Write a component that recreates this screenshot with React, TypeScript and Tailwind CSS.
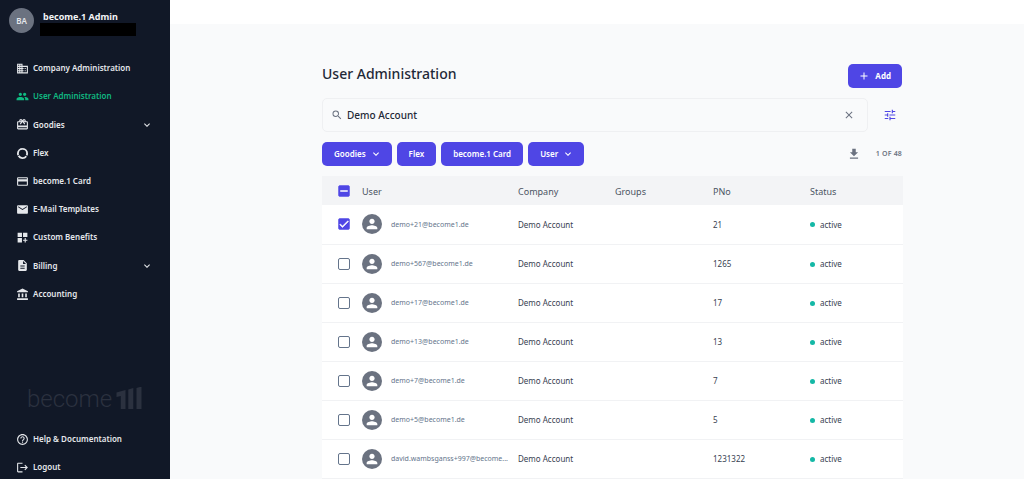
import { useState } from "react";
import type { ComponentType } from "react";
import {
	MdAccountBalance,
	MdAdd,
	MdBusiness,
	MdCardGiftcard,
	MdCheck,
	MdClose,
	MdCreditCard,
	MdDashboardCustomize,
	MdDescription,
	MdEmail,
	MdExpandMore,
	MdGetApp,
	MdGroup,
	MdHelpOutline,
	MdLogout,
	MdPerson,
	MdRemove,
	MdSearch,
	MdTune,
} from "react-icons/md";

interface NavItem {
	label: string;
	icon: ComponentType<{ className?: string }>;
	active?: boolean;
	expandable?: boolean;
}

interface User {
	email: string;
	pno: string;
}

function FlexIcon({ className = "" }: { className?: string }) {
	return (
		<svg viewBox="0 0 24 24" fill="none" className={className}>
			<circle
				cx="12"
				cy="12"
				r="8.5"
				stroke="currentColor"
				strokeWidth="3.4"
				strokeDasharray="16.3 1.5"
				transform="rotate(-87 12 12)"
			/>
		</svg>
	);
}

const navItems: NavItem[] = [
	{ label: "Company Administration", icon: MdBusiness },
	{ label: "User Administration", icon: MdGroup, active: true },
	{ label: "Goodies", icon: MdCardGiftcard, expandable: true },
	{ label: "Flex", icon: FlexIcon },
	{ label: "become.1 Card", icon: MdCreditCard },
	{ label: "E-Mail Templates", icon: MdEmail },
	{ label: "Custom Benefits", icon: MdDashboardCustomize },
	{ label: "Billing", icon: MdDescription, expandable: true },
	{ label: "Accounting", icon: MdAccountBalance },
];

const footerItems: NavItem[] = [
	{ label: "Help & Documentation", icon: MdHelpOutline },
	{ label: "Logout", icon: MdLogout },
];

const filters = [
	{ label: "Goodies", menu: true },
	{ label: "Flex", menu: false },
	{ label: "become.1 Card", menu: false },
	{ label: "User", menu: true },
];

const users: User[] = [
	{ email: "demo+21@become1.de", pno: "21" },
	{ email: "demo+567@become1.de", pno: "1265" },
	{ email: "demo+17@become1.de", pno: "17" },
	{ email: "demo+13@become1.de", pno: "13" },
	{ email: "demo+7@become1.de", pno: "7" },
	{ email: "demo+5@become1.de", pno: "5" },
	{ email: "david.wambsganss+997@become...", pno: "1231322" },
];

function NavEntry({ label, icon: Icon, active, expandable }: NavItem) {
	const tone = active ? "text-[#10b981]" : "text-[#e5e7eb]";
	const base = `flex w-full items-center gap-1 pl-4 pr-[17px] text-[8px] font-semibold ${tone}`;

	if (expandable) {
		return (
			<button type="button" className={`${base} h-[25px]`}>
				<Icon className="size-[13px] shrink-0" />
				<span className="flex-1 text-left">{label}</span>
				<MdExpandMore className="size-3" />
			</button>
		);
	}

	return (
		<a href="#" className={`${base} h-6`}>
			<Icon className="size-[13px] shrink-0" />
			{label}
		</a>
	);
}

function Logo() {
	return (
		<div className="flex h-6 items-end gap-1 pl-[27px] text-[#2b313f]">
			<span className="font-[Roboto,sans-serif] text-[24px] leading-6 font-light">
				become
			</span>
			<svg viewBox="0 0 26 24" className="h-6 w-[26px]" fill="currentColor">
				<path d="M0.500 5.500 9.500 3V22H4.800V9L0.500 10Z" />
				<path d="M12.300 2.500 17.300 1V22H12.300Z" />
				<path d="M20.500 1 25.500 -0.500V22H20.500Z" />
			</svg>
		</div>
	);
}

interface CheckboxProps {
	label: string;
	checked: boolean;
	indeterminate?: boolean;
	onChange: () => void;
}

function Checkbox({ label, checked, indeterminate = false, onChange }: CheckboxProps) {
	const filled = checked || indeterminate;
	const Mark = indeterminate ? MdRemove : MdCheck;

	return (
		<label className="relative ml-4 block size-3">
			<input
				type="checkbox"
				aria-label={label}
				checked={checked}
				onChange={onChange}
				className={`block size-3 appearance-none rounded-[2px] border ${
					filled ? "border-[#4f46e5] bg-[#4f46e5]" : "border-[#64748b] bg-white"
				}`}
			/>
			{filled && (
				<Mark className="pointer-events-none absolute inset-0 size-3 stroke-white stroke-1 text-white" />
			)}
		</label>
	);
}

export default function App() {
	const [query, setQuery] = useState("Demo Account");
	const [selected, setSelected] = useState<string[]>([users[0].email]);

	const allSelected = selected.length === users.length;

	const toggle = (email: string) =>
		setSelected((prev) =>
			prev.includes(email) ? prev.filter((e) => e !== email) : [...prev, email],
		);

	return (
		<div className="flex h-screen bg-[#f9fafb] font-['Noto_Sans',sans-serif] text-[#1f2937]">
			<aside className="flex w-[170px] shrink-0 flex-col overflow-hidden bg-[#111827]">
				<div className="flex gap-2 pt-2 pl-[9px]">
					<div className="flex size-[25px] items-center justify-center rounded-full bg-[#6b7280] text-[8px] font-semibold text-[#e5e7eb]">
						BA
					</div>
					<div>
						<p className="pt-[2px] pl-px text-[9px] leading-[13px] font-bold text-[#f3f4f6]">
							become.1 Admin
						</p>
						<div className="-ml-[2px] h-[13px] w-24 bg-black" />
					</div>
				</div>

				<nav className="mt-5 flex flex-col gap-1">
					{navItems.map((item) => (
						<NavEntry key={item.label} {...item} />
					))}
				</nav>

				<div className="mt-auto flex flex-col gap-1">
					<div className="pb-3">
						<Logo />
					</div>
					{footerItems.map((item) => (
						<NavEntry key={item.label} {...item} />
					))}
				</div>
			</aside>

			<div className="flex min-w-0 flex-1 flex-col">
				<header className="h-6 shrink-0 bg-white" />

				<main className="min-h-0 flex-1 overflow-y-auto pt-10 pl-[31px]">
					<div className="mx-auto max-w-[581px]">
						<div className="pr-px">
							<div className="flex items-start justify-between">
								<h1 className="text-[14px] leading-5 font-medium">User Administration</h1>
								<button
									type="button"
									className="flex h-6 items-center gap-1 rounded-[5px] bg-[#4f46e5] px-[10px] text-[8px] font-bold text-white"
								>
									<MdAdd className="size-3" />
									<span className="px-px">Add</span>
								</button>
							</div>

							<div className="mt-[10px] flex items-center">
								<label className="flex h-[34px] flex-1 items-center gap-1 rounded-[5px] border border-[#eff0f2] px-2">
									<MdSearch className="size-3 text-[#6b7280]" />
									<input
										type="text"
										aria-label="Search"
										value={query}
										onChange={(e) => setQuery(e.target.value)}
										className="min-w-0 flex-1 bg-transparent text-[10px] font-medium outline-none"
									/>
									<button
										type="button"
										aria-label="Clear search"
										onClick={() => setQuery("")}
										className="px-1"
									>
										<MdClose className="size-3 text-[#6b7280]" />
									</button>
								</label>
								<button type="button" aria-label="Filter settings" className="ml-[15px] mr-[5px]">
									<MdTune className="size-[14px] text-[#4f46e5]" />
								</button>
							</div>

							<div className="mt-[10px] flex items-center gap-[5px]">
								{filters.map(({ label, menu }) => (
									<button
										key={label}
										type="button"
										className={`flex h-6 items-center gap-1 rounded-[5px] bg-[#4f46e5] pl-3 text-[8px] font-semibold text-white ${
											menu ? "pr-[10px]" : "pr-3"
										}`}
									>
										{label}
										{menu && <MdExpandMore className="size-3" />}
									</button>
								))}
								<button type="button" aria-label="Download" className="mr-[10px] ml-auto">
									<MdGetApp className="size-[14px] text-[#6b7280]" />
								</button>
								<span className="text-[7px] font-semibold tracking-wide text-[#6b7280]">
									1 OF 48
								</span>
							</div>
						</div>

						<table className="mt-[10px] w-full table-fixed text-left">
							<colgroup>
								<col className="w-10" />
								<col />
								<col className="w-[97px]" />
								<col className="w-[98px]" />
								<col className="w-[97px]" />
								<col className="w-[93px]" />
							</colgroup>
							<thead className="bg-[#f3f4f6] text-[9px] text-[#4b5563]">
								<tr className="h-[29px]">
									<th>
										<Checkbox
											label="Select all users"
											checked={allSelected}
											indeterminate={selected.length > 0 && !allSelected}
											onChange={() =>
												setSelected(allSelected ? [] : users.map((u) => u.email))
											}
										/>
									</th>
									<th className="pt-[2px] font-normal">User</th>
									<th className="pt-[2px] font-normal">Company</th>
									<th className="pt-[2px] font-normal">Groups</th>
									<th className="pt-[2px] font-normal">PNo</th>
									<th className="pt-[2px] font-normal">Status</th>
								</tr>
							</thead>
							<tbody className="bg-white text-[8px] text-[#374151]">
								{users.map(({ email, pno }) => (
									<tr key={email} className="h-[39px] border-b border-[#f1f2f4]">
										<td>
											<Checkbox
												label={`Select ${email}`}
												checked={selected.includes(email)}
												onChange={() => toggle(email)}
											/>
										</td>
										<td>
											<div className="flex items-center gap-[9px]">
												<span className="flex size-5 shrink-0 items-center justify-center rounded-full bg-[#6b7280]">
													<MdPerson className="size-4 text-white" />
												</span>
												<span className="pt-[2px] text-[7px] whitespace-nowrap text-[#64748b]">
													{email}
												</span>
											</div>
										</td>
										<td className="pt-px">Demo Account</td>
										<td />
										<td className="pt-px">{pno}</td>
										<td className="pt-px">
											<span className="flex items-center gap-[5px]">
												<span className="size-[5px] rounded-full bg-[#14b8a6]" />
												active
											</span>
										</td>
									</tr>
								))}
							</tbody>
						</table>
					</div>
				</main>
			</div>
		</div>
	);
}
